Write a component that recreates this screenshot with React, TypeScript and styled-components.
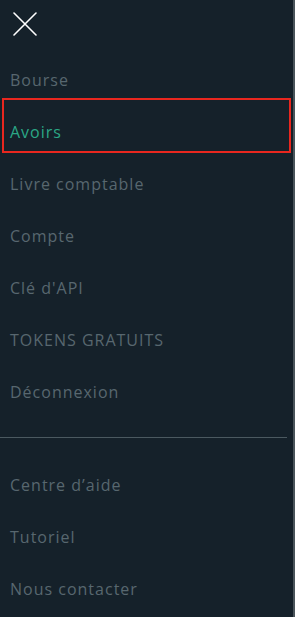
import React from "react";
import styled, { createGlobalStyle } from "styled-components";

const Global = createGlobalStyle`
  html, body { margin: 0; padding: 0; background: #15212a; }
  * { box-sizing: border-box; }
`;

const Drawer = styled.nav`
  width: 295px;
  height: 617px;
  background: #15212a;
  border-right: 2px solid #4a545a;
  display: flex;
  flex-direction: column;
  font-family: "Open Sans", "Noto Sans", sans-serif;
  overflow: hidden;
`;

const Header = styled.div`
  height: 54px;
  display: flex;
  align-items: flex-start;
  padding: 12px 0 0 13px;
`;

const CloseButton = styled.button`
  background: none;
  border: 0;
  padding: 0;
  width: 24px;
  height: 24px;
  cursor: pointer;
  display: flex;
`;

const List = styled.ul`
  list-style: none;
  margin: 0;
  padding: 0;
  display: flex;
  flex-direction: column;
`;

const Item = styled.li<{ $active?: boolean }>`
  position: relative;
  height: 52px;
  display: flex;
  align-items: center;
  padding-left: 10px;
  font-size: 16px;
  letter-spacing: 1px;
  color: ${(p) => (p.$active ? "#2ba886" : "#58676f")};
`;

const Highlight = styled.span`
  position: absolute;
  left: 2px;
  top: -8px;
  width: 289px;
  height: 55px;
  border: 2px solid #e8271f;
  pointer-events: none;
`;

const Divider = styled.hr`
  border: 0;
  height: 1px;
  background: #4b5960;
  margin: 19px 6px 21px 0;
`;

const main = [
  "Bourse",
  "Avoirs",
  "Livre comptable",
  "Compte",
  "Clé d'API",
  "TOKENS GRATUITS",
  "Déconnexion",
];
const secondary = ["Centre d’aide", "Tutoriel", "Nous contacter"];

export default function App() {
  return (
    <>
      <Global />
      <Drawer>
        <Header>
          <CloseButton aria-label="Fermer">
            <svg width="24" height="24" viewBox="0 0 24 24">
              <path
                d="M1 1 L23 23 M23 1 L1 23"
                stroke="#ffffff"
                strokeWidth="1.6"
                strokeLinecap="round"
              />
            </svg>
          </CloseButton>
        </Header>
        <List>
          {main.map((t) => (
            <Item key={t} $active={t === "Avoirs"}>
              {t === "Avoirs" && <Highlight />}
              {t}
            </Item>
          ))}
        </List>
        <Divider />
        <List>
          {secondary.map((t) => (
            <Item key={t}>{t}</Item>
          ))}
        </List>
      </Drawer>
    </>
  );
}
